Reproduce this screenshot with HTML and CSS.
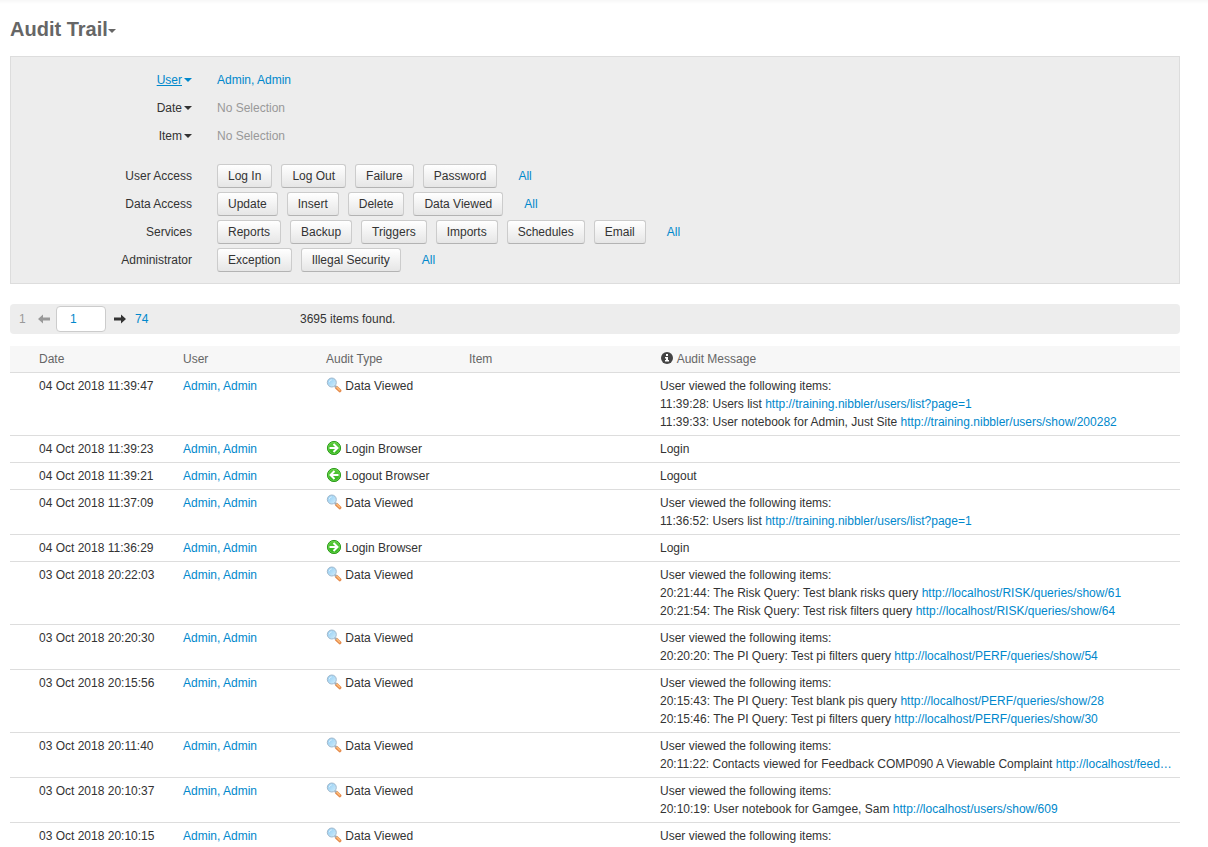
FILE: index.html
```html
<!DOCTYPE html>
<html lang="en">
<head>
  <meta charset="UTF-8">
  <meta name="viewport" content="width=device-width, initial-scale=1.0">
  <title>Audit Trail</title>
  <link rel="stylesheet" href="styles.css">
</head>
<body>
  <!-- shared icons -->
  <svg class="sprite" aria-hidden="true">
    <defs>
      <linearGradient id="lens" x1="0" y1="0" x2="1" y2="1">
        <stop offset="0" stop-color="#8ccaf2"/>
        <stop offset="1" stop-color="#d3eefc"/>
      </linearGradient>
      <linearGradient id="ball" x1="0" y1="0" x2="0" y2="1">
        <stop offset="0" stop-color="#5ccb3c"/>
        <stop offset="1" stop-color="#2fb31a"/>
      </linearGradient>
    </defs>
    <symbol id="icon-view" viewBox="0 0 16 16">
      <path d="M10.500 10.500l3.300 3.200" stroke="#e58a4c" stroke-width="3.200" stroke-linecap="round"/>
      <path d="M10.800 10.200l2.800 2.700" stroke="#fdbf7a" stroke-width="1.400" stroke-linecap="round"/>
      <path d="M8.800 8.800l1.500 1.500" stroke="#9fb0bd" stroke-width="2"/>
      <circle cx="5.800" cy="5.500" r="4.500" fill="url(#lens)" stroke="#a3b9cc"/>
      <path d="M3.200 5.300a2.600 2.600 0 0 1 2.600-2.500" fill="none" stroke="#fff" stroke-opacity=".6"/>
    </symbol>
    <symbol id="icon-in" viewBox="0 0 16 16">
      <circle cx="8" cy="8" r="6.600" fill="url(#ball)" stroke="#2d9a1c"/>
      <circle cx="8" cy="8" r="5.700" fill="none" stroke="#74d957" stroke-width=".6"/>
      <path d="M3.500 8h7.500M7.500 4L11.500 8l-4 4" fill="none" stroke="#fff" stroke-width="2"/>
    </symbol>
    <symbol id="icon-out" viewBox="0 0 16 16">
      <circle cx="8" cy="8" r="6.600" fill="url(#ball)" stroke="#2d9a1c"/>
      <circle cx="8" cy="8" r="5.700" fill="none" stroke="#74d957" stroke-width=".6"/>
      <path d="M12.500 8H5M8.500 4l-4 4 4 4" fill="none" stroke="#fff" stroke-width="2"/>
    </symbol>
  </svg>

  <div class="container">
    <h1 class="page-title">Audit Trail<span class="caret"></span></h1>

    <form class="filters">
      <div class="filter-row">
        <div class="filter-label"><a href="#" class="filter-menu active"><span>User</span><i class="caret"></i></a></div>
        <div class="filter-value"><a href="#">Admin, Admin</a></div>
      </div>
      <div class="filter-row">
        <div class="filter-label"><a href="#" class="filter-menu"><span>Date</span><i class="caret"></i></a></div>
        <div class="filter-value muted">No Selection</div>
      </div>
      <div class="filter-row">
        <div class="filter-label"><a href="#" class="filter-menu"><span>Item</span><i class="caret"></i></a></div>
        <div class="filter-value muted">No Selection</div>
      </div>

      <div class="filter-group">
        <div class="filter-row">
          <div class="filter-label">User Access</div>
          <div class="filter-value">
            <button type="button" class="btn">Log In</button>
            <button type="button" class="btn">Log Out</button>
            <button type="button" class="btn">Failure</button>
            <button type="button" class="btn">Password</button>
            <a href="#" class="all">All</a>
          </div>
        </div>
        <div class="filter-row">
          <div class="filter-label">Data Access</div>
          <div class="filter-value">
            <button type="button" class="btn">Update</button>
            <button type="button" class="btn">Insert</button>
            <button type="button" class="btn">Delete</button>
            <button type="button" class="btn">Data Viewed</button>
            <a href="#" class="all">All</a>
          </div>
        </div>
        <div class="filter-row">
          <div class="filter-label">Services</div>
          <div class="filter-value">
            <button type="button" class="btn">Reports</button>
            <button type="button" class="btn">Backup</button>
            <button type="button" class="btn">Triggers</button>
            <button type="button" class="btn">Imports</button>
            <button type="button" class="btn">Schedules</button>
            <button type="button" class="btn">Email</button>
            <a href="#" class="all">All</a>
          </div>
        </div>
        <div class="filter-row">
          <div class="filter-label">Administrator</div>
          <div class="filter-value">
            <button type="button" class="btn">Exception</button>
            <button type="button" class="btn">Illegal Security</button>
            <a href="#" class="all">All</a>
          </div>
        </div>
      </div>
    </form>

    <div class="pager">
      <div class="pager-nav">
        <span class="pager-first">1</span>
        <svg class="arrow muted" viewBox="0 0 12 10"><path d="M0 5l5-4.500V3.500h7v3H5v3z" fill="currentColor"/></svg>
        <input type="text" class="pager-input" value="1" aria-label="Page">
        <a href="#" class="pager-next" aria-label="Next page"><svg class="arrow" viewBox="0 0 12 10"><path d="M12 5L7 .5v3H0v3h7v3z" fill="currentColor"/></svg></a>
        <a href="#">74</a>
      </div>
      <div>3695 items found.</div>
    </div>

    <table class="audit">
      <thead>
        <tr>
          <th class="col-date">Date</th>
          <th class="col-user">User</th>
          <th class="col-type">Audit Type</th>
          <th class="col-item">Item</th>
          <th><svg class="info" viewBox="0 0 12 12"><circle cx="6" cy="6" r="6" fill="#444"/><path d="M5 2h2v2H5zM4 5h3v3h1v1.500H4V8h1V6.500H4z" fill="#fff"/></svg> Audit Message</th>
        </tr>
      </thead>
      <tbody>
        <tr>
          <td>04 Oct 2018 11:39:47</td>
          <td><a href="#">Admin, Admin</a></td>
          <td><svg class="icon"><use href="#icon-view"/></svg> Data Viewed</td>
          <td></td>
          <td>User viewed the following items:<br>11:39:28: Users list <a href="#">http://training.nibbler/users/list?page=1</a><br>11:39:33: User notebook for Admin, Just Site <a href="#">http://training.nibbler/users/show/200282</a></td>
        </tr>
        <tr>
          <td>04 Oct 2018 11:39:23</td>
          <td><a href="#">Admin, Admin</a></td>
          <td><svg class="icon"><use href="#icon-in"/></svg> Login Browser</td>
          <td></td>
          <td>Login</td>
        </tr>
        <tr>
          <td>04 Oct 2018 11:39:21</td>
          <td><a href="#">Admin, Admin</a></td>
          <td><svg class="icon"><use href="#icon-out"/></svg> Logout Browser</td>
          <td></td>
          <td>Logout</td>
        </tr>
        <tr>
          <td>04 Oct 2018 11:37:09</td>
          <td><a href="#">Admin, Admin</a></td>
          <td><svg class="icon"><use href="#icon-view"/></svg> Data Viewed</td>
          <td></td>
          <td>User viewed the following items:<br>11:36:52: Users list <a href="#">http://training.nibbler/users/list?page=1</a></td>
        </tr>
        <tr>
          <td>04 Oct 2018 11:36:29</td>
          <td><a href="#">Admin, Admin</a></td>
          <td><svg class="icon"><use href="#icon-in"/></svg> Login Browser</td>
          <td></td>
          <td>Login</td>
        </tr>
        <tr>
          <td>03 Oct 2018 20:22:03</td>
          <td><a href="#">Admin, Admin</a></td>
          <td><svg class="icon"><use href="#icon-view"/></svg> Data Viewed</td>
          <td></td>
          <td>User viewed the following items:<br>20:21:44: The Risk Query: Test blank risks query <a href="#">http://localhost/RISK/queries/show/61</a><br>20:21:54: The Risk Query: Test risk filters query <a href="#">http://localhost/RISK/queries/show/64</a></td>
        </tr>
        <tr>
          <td>03 Oct 2018 20:20:30</td>
          <td><a href="#">Admin, Admin</a></td>
          <td><svg class="icon"><use href="#icon-view"/></svg> Data Viewed</td>
          <td></td>
          <td>User viewed the following items:<br>20:20:20: The PI Query: Test pi filters query <a href="#">http://localhost/PERF/queries/show/54</a></td>
        </tr>
        <tr>
          <td>03 Oct 2018 20:15:56</td>
          <td><a href="#">Admin, Admin</a></td>
          <td><svg class="icon"><use href="#icon-view"/></svg> Data Viewed</td>
          <td></td>
          <td>User viewed the following items:<br>20:15:43: The PI Query: Test blank pis query <a href="#">http://localhost/PERF/queries/show/28</a><br>20:15:46: The PI Query: Test pi filters query <a href="#">http://localhost/PERF/queries/show/30</a></td>
        </tr>
        <tr>
          <td>03 Oct 2018 20:11:40</td>
          <td><a href="#">Admin, Admin</a></td>
          <td><svg class="icon"><use href="#icon-view"/></svg> Data Viewed</td>
          <td></td>
          <td>User viewed the following items:<br>20:11:22: Contacts viewed for Feedback COMP090 A Viewable Complaint <a href="#">http://localhost/feed…</a></td>
        </tr>
        <tr>
          <td>03 Oct 2018 20:10:37</td>
          <td><a href="#">Admin, Admin</a></td>
          <td><svg class="icon"><use href="#icon-view"/></svg> Data Viewed</td>
          <td></td>
          <td>User viewed the following items:<br>20:10:19: User notebook for Gamgee, Sam <a href="#">http://localhost/users/show/609</a></td>
        </tr>
        <tr>
          <td>03 Oct 2018 20:10:15</td>
          <td><a href="#">Admin, Admin</a></td>
          <td><svg class="icon"><use href="#icon-view"/></svg> Data Viewed</td>
          <td></td>
          <td>User viewed the following items:</td>
        </tr>
      </tbody>
    </table>
  </div>
</body>
</html>
```

FILE: styles.css
```css
body {
  margin: 0;
  font-family: Arial, "Liberation Sans", sans-serif;
  font-size: 12px;
  line-height: 18px;
  color: #333;
  background: #fff linear-gradient(#f7f7f7, #fff) repeat-x;
  background-size: 100% 4px;
}
a {
  color: #0088cc;
  text-decoration: none;
}
.sprite {
  position: absolute;
  width: 0;
  height: 0;
}
.container {
  padding: 16px 28px 0 10px;
}
.muted {
  color: #999;
}
.page-title {
  margin: 0 0 14px;
  font-size: 20px;
  line-height: 26px;
  color: #666;
}
.caret {
  display: inline-block;
  border-top: 4px solid currentColor;
  border-left: 4px solid transparent;
  border-right: 4px solid transparent;
  vertical-align: middle;
}

/* filters */
.filters {
  padding: 9px 0;
  background: #ededed;
  border: 1px solid #ddd;
}
.filter-row {
  display: flex;
  gap: 25px;
  min-height: 28px;
  line-height: 28px;
}
.filter-label {
  width: 181px;
  flex-shrink: 0;
  text-align: right;
}
.filter-value {
  display: flex;
  flex-wrap: wrap;
  align-items: center;
  gap: 0 9px;
}
.filter-menu {
  display: inline-flex;
  align-items: center;
  gap: 2px;
  color: #333;
}
.filter-menu.active {
  color: #0088cc;
}
.filter-menu.active span {
  text-decoration: underline;
}
.filter-group {
  margin-top: 12px;
}
.btn {
  height: 24px;
  padding: 0 10px;
  font-family: inherit;
  font-size: 12px;
  line-height: 18px;
  color: #333;
  background: linear-gradient(#fff, #e6e6e6);
  border: 1px solid #ccc;
  border-bottom-color: #b3b3b3;
  border-radius: 3px;
  cursor: pointer;
}
.all {
  margin-left: 12px;
}

/* pager */
.pager {
  display: flex;
  align-items: center;
  height: 30px;
  margin-top: 20px;
  background: #ededed;
  border-radius: 4px;
}
.pager-nav {
  display: flex;
  align-items: center;
  width: 281px;
  padding-left: 9px;
}
.pager-first {
  width: 19px;
  color: #999;
}
.arrow {
  display: block;
  width: 12px;
  height: 10px;
}
.pager-input {
  box-sizing: border-box;
  width: 50px;
  height: 26px;
  margin: 0 8px 0 6px;
  padding: 0 13px;
  font-family: inherit;
  font-size: 12px;
  color: #0088cc;
  background: #fff;
  border: 1px solid #ccc;
  border-radius: 4px;
}
.pager-next {
  margin-right: 9px;
  color: #333;
}

/* audit table */
.audit {
  width: 100%;
  margin-top: 12px;
  table-layout: fixed;
  border-collapse: separate;
  border-spacing: 0;
}
.audit th,
.audit td {
  box-sizing: border-box;
  padding: 4px 8px;
  text-align: left;
  vertical-align: top;
  white-space: nowrap;
  overflow: hidden;
  text-overflow: ellipsis;
  border-bottom: 1px solid #ddd;
}
.audit th {
  font-weight: normal;
  color: #666;
  background: #f7f7f7;
}
.audit th:first-child,
.audit td:first-child {
  padding-left: 29px;
}
.audit .col-date {
  width: 165px;
}
.audit .col-user,
.audit .col-type {
  width: 143px;
}
.audit .col-item {
  width: 191px;
}
.icon {
  width: 16px;
  height: 16px;
  vertical-align: top;
}
.info {
  width: 12px;
  height: 12px;
  margin: 0 1px;
  vertical-align: -1px;
}
```
